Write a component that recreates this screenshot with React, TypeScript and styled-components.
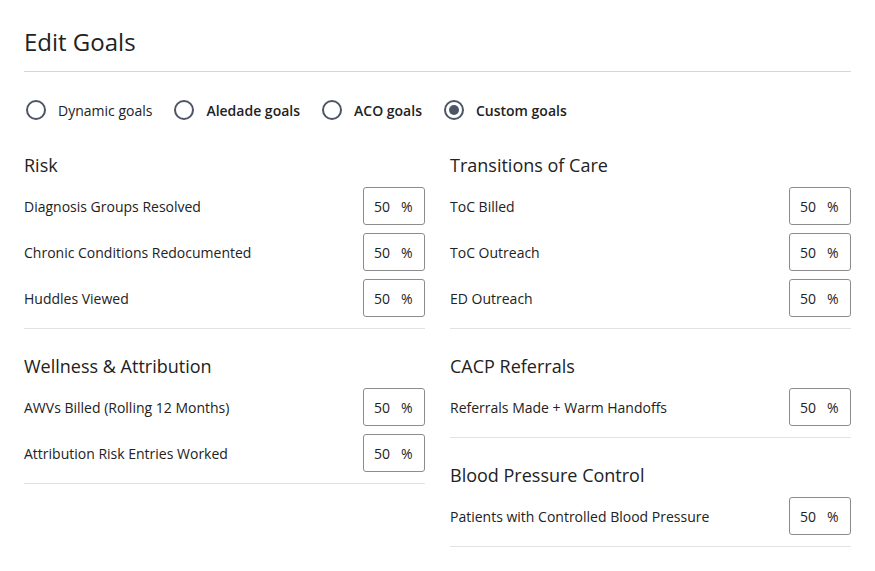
import React from "react";
import styled, { createGlobalStyle } from "styled-components";

const GlobalStyle = createGlobalStyle`
    body {
        margin: 0;
        background: #fff;
        font-family: "Open Sans", "Noto Sans", sans-serif;
        color: #222;
    }
`;

type Goal = { label: string; value: number };
type Section = { title: string; goals: Goal[] };

const leftSections: Section[] = [
    {
        title: "Risk",
        goals: [
            { label: "Diagnosis Groups Resolved", value: 50 },
            { label: "Chronic Conditions Redocumented", value: 50 },
            { label: "Huddles Viewed", value: 50 },
        ],
    },
    {
        title: "Wellness & Attribution",
        goals: [
            { label: "AWVs Billed (Rolling 12 Months)", value: 50 },
            { label: "Attribution Risk Entries Worked", value: 50 },
        ],
    },
];

const rightSections: Section[] = [
    {
        title: "Transitions of Care",
        goals: [
            { label: "ToC Billed", value: 50 },
            { label: "ToC Outreach", value: 50 },
            { label: "ED Outreach", value: 50 },
        ],
    },
    {
        title: "CACP Referrals",
        goals: [{ label: "Referrals Made + Warm Handoffs", value: 50 }],
    },
    {
        title: "Blood Pressure Control",
        goals: [{ label: "Patients with Controlled Blood Pressure", value: 50 }],
    },
];

const options = [
    { label: "Dynamic goals", bold: false },
    { label: "Aledade goals", bold: true },
    { label: "ACO goals", bold: true },
    { label: "Custom goals", bold: true },
];

export default function App() {
    const selected = "Custom goals";
    return (
        <>
            <GlobalStyle />
            <Page>
                <Title>Edit Goals</Title>
                <RadioRow>
                    {options.map((o) => (
                        <RadioOption key={o.label}>
                            <Circle $checked={o.label === selected} />
                            <RadioLabel $bold={o.bold}>{o.label}</RadioLabel>
                        </RadioOption>
                    ))}
                </RadioRow>
                <Columns>
                    {[leftSections, rightSections].map((col, i) => (
                        <Column key={i}>
                            {col.map((s) => (
                                <SectionBlock key={s.title}>
                                    <SectionTitle>{s.title}</SectionTitle>
                                    <Rows>
                                        {s.goals.map((g) => (
                                            <Row key={g.label}>
                                                <RowLabel>{g.label}</RowLabel>
                                                <PercentBox>
                                                    <span>{g.value}</span>
                                                    <span>%</span>
                                                </PercentBox>
                                            </Row>
                                        ))}
                                    </Rows>
                                </SectionBlock>
                            ))}
                        </Column>
                    ))}
                </Columns>
            </Page>
        </>
    );
}

const Page = styled.div`
    width: 827px;
    padding: 26px 24px 0;
`;

const Title = styled.h1`
    margin: 0;
    font-size: 24px;
    font-weight: 400;
    line-height: 32px;
    padding-bottom: 13px;
    border-bottom: 1px solid #d6d6d6;
`;

const RadioRow = styled.div`
    display: flex;
    align-items: center;
    gap: 22px;
    margin-top: 27px;
    height: 22px;
    padding-left: 2px;
`;

const RadioOption = styled.label`
    display: flex;
    align-items: center;
    gap: 12px;
`;

const Circle = styled.span<{ $checked: boolean }>`
    box-sizing: border-box;
    width: 20px;
    height: 20px;
    border-radius: 50%;
    border: 2px solid #4d5566;
    display: flex;
    align-items: center;
    justify-content: center;
    &::after {
        content: "";
        display: ${(p) => (p.$checked ? "block" : "none")};
        width: 10px;
        height: 10px;
        border-radius: 50%;
        background: #4d5566;
    }
`;

const RadioLabel = styled.span<{ $bold: boolean }>`
    font-size: 14px;
    font-weight: ${(p) => (p.$bold ? 600 : 400)};
    color: #222;
`;

const Columns = styled.div`
    display: grid;
    grid-template-columns: 401px 401px;
    column-gap: 25px;
    margin-top: 32px;
    align-items: start;
`;

const Column = styled.div`
    display: flex;
    flex-direction: column;
    gap: 25px;
`;

const SectionBlock = styled.section`
    padding-bottom: 11px;
    border-bottom: 1px solid #e2e2e2;
`;

const SectionTitle = styled.h2`
    margin: 0 0 10px;
    font-size: 18px;
    font-weight: 400;
    line-height: 24px;
`;

const Rows = styled.div`
    display: flex;
    flex-direction: column;
    gap: 8px;
`;

const Row = styled.div`
    display: flex;
    align-items: center;
    justify-content: space-between;
    height: 38px;
`;

const RowLabel = styled.span`
    font-size: 14px;
    color: #222;
`;

const PercentBox = styled.div`
    box-sizing: border-box;
    width: 62px;
    height: 38px;
    border: 1px solid #8c8c8c;
    border-radius: 3px;
    display: flex;
    align-items: center;
    gap: 11px;
    padding-left: 10px;
    font-size: 14px;
    color: #222;
`;
